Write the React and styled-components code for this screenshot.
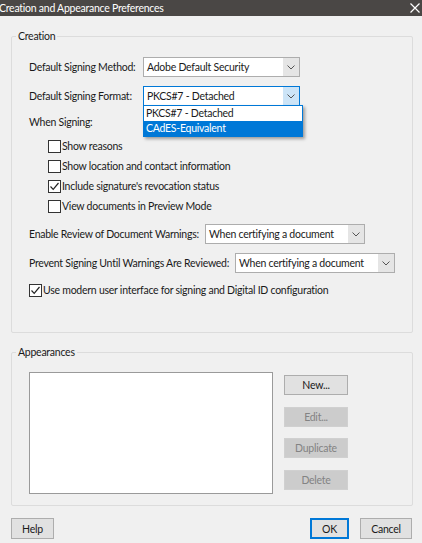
import React from 'react'
import styled, { createGlobalStyle } from 'styled-components'

const GlobalStyle = createGlobalStyle`
  html, body {
    margin: 0;
    padding: 0;
    background: #f0f0f0;
  }
  body {
    font-family: Lato, 'Noto Sans', sans-serif;
    font-size: 10.5px;
    letter-spacing: -0.25px;
    color: #1a1a1a;
  }
`

const Window = styled.div`
  width: 422px;
  height: 543px;
  background: #f0f0f0;
  display: flex;
  flex-direction: column;
  overflow: hidden;
`

const TitleBar = styled.div`
  height: 16px;
  background: #4a4745;
  color: #fff;
  display: flex;
  align-items: center;
  justify-content: space-between;
  font-size: 10.5px;
  line-height: 16px;
  span {
    margin-left: -1px;
  }
`

const Close = styled.svg`
  width: 10px;
  height: 10px;
  margin-right: 2px;
`

const Body = styled.div`
  flex: 1;
  display: flex;
  flex-direction: column;
  padding: 13px 9px 0 11px;
`

const Group = styled.fieldset`
  margin: 0;
  border: 1px solid #dcdcdc;
  border-radius: 2px;
  padding: 0;
  height: ${(p) => p.h}px;
  box-sizing: border-box;
  legend {
    margin-left: 4px;
    padding: 0 2px;
    line-height: 14px;
  }
`

const Form = styled.div`
  display: flex;
  flex-direction: column;
  padding: 14px 0 0 17px;
`

const Row = styled.div`
  display: flex;
  align-items: center;
  height: ${(p) => p.h || 20}px;
  margin-top: ${(p) => p.mt || 0}px;
`

const Label = styled.div`
  width: ${(p) => (p.w ? p.w + 'px' : 'auto')};
  flex-shrink: 0;
  white-space: nowrap;
`

const Select = styled.div`
  width: ${(p) => p.w}px;
  height: 20px;
  box-sizing: border-box;
  background: #fff;
  border: 1px solid ${(p) => (p.focus ? '#0078d7' : '#adadad')};
  display: flex;
  align-items: center;
  padding-left: 3px;
  white-space: nowrap;
  position: relative;
`

const SelectText = styled.div`
  flex: 1;
`

const Arrow = styled.div`
  width: 16px;
  height: 18px;
  display: flex;
  align-items: center;
  justify-content: center;
  background: ${(p) => (p.focus ? '#cce4f7' : '#e5e5e5')};
`

const DropList = styled.div`
  position: absolute;
  left: -1px;
  top: 18px;
  width: 158px;
  background: #fff;
  border: 1px solid #0078d7;
  box-shadow: 2px 2px 3px rgba(0, 0, 0, 0.35);
  z-index: 5;
`

const Option = styled.div`
  height: 15px;
  line-height: 15px;
  padding-left: 2px;
  background: ${(p) => (p.active ? '#0078d7' : '#fff')};
  color: ${(p) => (p.active ? '#fff' : '#1a1a1a')};
`

const Checks = styled.div`
  display: flex;
  flex-direction: column;
  padding-left: ${(p) => p.indent || 0}px;
  margin-top: ${(p) => p.mt || 0}px;
`

const CheckRow = styled.label`
  display: flex;
  align-items: center;
  height: 20px;
`

const Box = styled.span`
  width: 11px;
  height: 11px;
  border: 1px solid #333;
  background: #fff;
  margin-right: 1px;
  display: flex;
  align-items: center;
  justify-content: center;
`

const Appearance = styled.div`
  display: flex;
  padding: 13px 0 0 17px;
  gap: 11px;
`

const ListBox = styled.div`
  width: 244px;
  height: 122px;
  box-sizing: border-box;
  background: #fff;
  border: 1px solid #9a9a9a;
`

const SideButtons = styled.div`
  display: flex;
  flex-direction: column;
  gap: 11.5px;
  padding-top: 3px;
`

const Button = styled.button`
  font-family: inherit;
  font-size: 10.5px;
  letter-spacing: -0.25px;
  width: ${(p) => p.w || 64}px;
  height: ${(p) => p.h || 20}px;
  box-sizing: border-box;
  padding: 0;
  border: 1px solid ${(p) => (p.primary ? '#0078d7' : p.disabled ? '#d0d0d0' : '#adadad')};
  box-shadow: ${(p) => (p.primary ? 'inset 0 0 0 1px #0078d7' : 'none')};
  background: ${(p) => (p.disabled ? '#cccccc' : '#e1e1e1')};
  color: ${(p) => (p.disabled ? '#838383' : '#1a1a1a')};
`

const Footer = styled.div`
  display: flex;
  align-items: center;
  padding: 12px 1px 0 0;
  gap: 11px;
  > :first-child {
    margin-right: auto;
  }
`

const Chevron = () => (
  <svg width="8" height="5" viewBox="0 0 8 5">
    <path d="M0.5 0.5 L4 4 L7.5 0.5" fill="none" stroke="#555" strokeWidth="1" />
  </svg>
)

const Tick = () => (
  <svg width="11" height="11" viewBox="0 0 11 11">
    <path d="M1.5 5.5 L4.2 8.3 L9.5 2" fill="none" stroke="#222" strokeWidth="1.2" />
  </svg>
)

const Check = ({ checked, children }) => (
  <CheckRow>
    <Box>{checked && <Tick />}</Box>
    {children}
  </CheckRow>
)

const Combo = ({ w, value, focus, children }) => (
  <Select w={w} focus={focus}>
    <SelectText>{value}</SelectText>
    <Arrow focus={focus}>
      <Chevron />
    </Arrow>
    {children}
  </Select>
)

export default function App() {
  return (
    <Window>
      <GlobalStyle />
      <TitleBar>
        <span>Creation and Appearance Preferences</span>
        <Close viewBox="0 0 10 10">
          <path d="M0.5 0.5 L9.5 9.5 M9.5 0.5 L0.5 9.5" stroke="#fff" strokeWidth="1.2" />
        </Close>
      </TitleBar>
      <Body>
        <Group h={304}>
          <legend>Creation</legend>
          <Form>
            <Row>
              <Label w={114}>Default Signing Method:</Label>
              <Combo w={157} value="Adobe Default Security" />
            </Row>
            <Row mt={9}>
              <Label w={114}>Default Signing Format:</Label>
              <Combo w={157} value="PKCS#7 - Detached" focus>
                <DropList>
                  <Option>PKCS#7 - Detached</Option>
                  <Option active>CAdES-Equivalent</Option>
                </DropList>
              </Combo>
            </Row>
            <Row h={16} mt={8}>
              <Label>When Signing:</Label>
            </Row>
            <Checks indent={19} mt={6}>
              <Check>Show reasons</Check>
              <Check>Show location and contact information</Check>
              <Check checked>Include signature's revocation status</Check>
              <Check>View documents in Preview Mode</Check>
            </Checks>
            <Row mt={8}>
              <Label w={176}>Enable Review of Document Warnings:</Label>
              <Combo w={160} value="When certifying a document" />
            </Row>
            <Row mt={9}>
              <Label w={206}>Prevent Signing Until Warnings Are Reviewed:</Label>
              <Combo w={160} value="When certifying a document" />
            </Row>
            <Checks mt={7}>
              <Check checked>Use modern user interface for signing and Digital ID configuration</Check>
            </Checks>
          </Form>
        </Group>
        <Group h={161} style={{ marginTop: 12 }}>
          <legend>Appearances</legend>
          <Appearance>
            <ListBox />
            <SideButtons>
              <Button>New...</Button>
              <Button disabled>Edit...</Button>
              <Button disabled>Duplicate</Button>
              <Button disabled>Delete</Button>
            </SideButtons>
          </Appearance>
        </Group>
        <Footer>
          <Button w={43} h={21}>Help</Button>
          <Button w={39} h={21} primary>OK</Button>
          <Button w={52} h={21}>Cancel</Button>
        </Footer>
      </Body>
    </Window>
  )
}
